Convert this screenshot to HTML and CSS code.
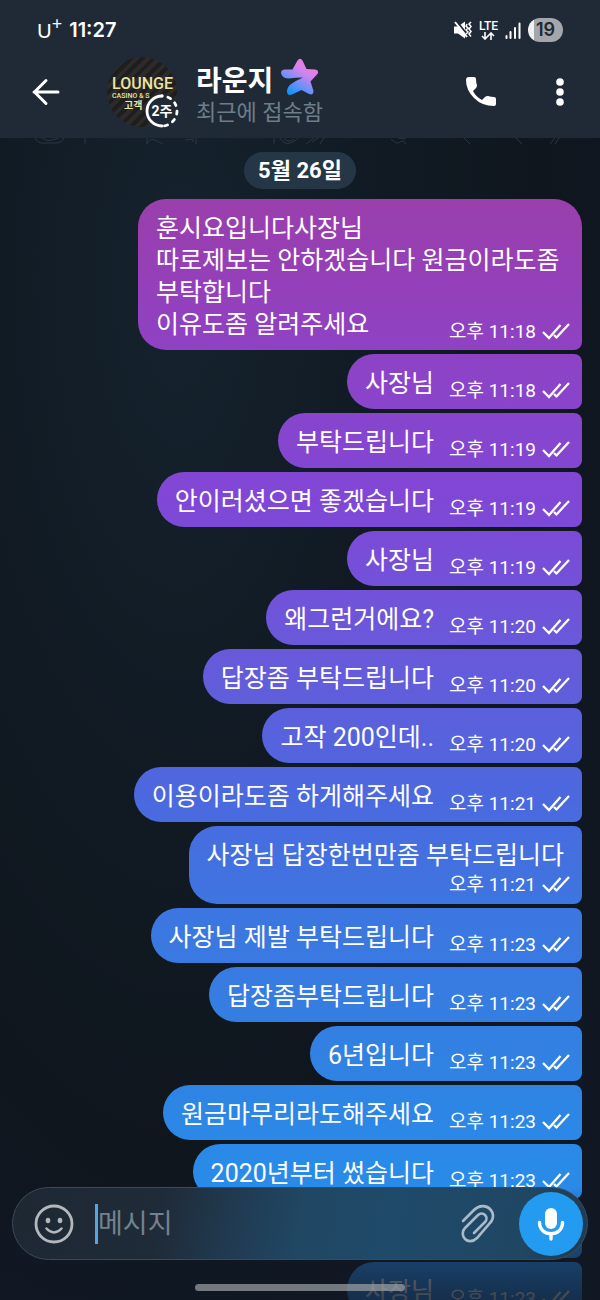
FILE: index.html
```
<!DOCTYPE html>
<html lang="ko">
<head>
    <meta charset="UTF-8">
    <title>라운지</title>
    <meta name="viewport" content="width=device-width, initial-scale=1">
    <link rel="stylesheet" href="styles.css">
</head>
<body>
    <!-- Shared icons -->
    <svg class="sprite" aria-hidden="true">
        <symbol id="checks" viewBox="0 0 28 18">
            <path d="M1 10l6 6L18.500 3M12 13l3 3M14 16L27 2" fill="none" stroke="currentColor" stroke-width="2.300"/>
        </symbol>
    </svg>

    <header class="header">
        <!-- Status bar -->
        <div class="status">
            <span class="carrier">U<sup>+</sup></span>
            <span class="clock">11:27</span>
            <div class="status-icons">
                <svg width="18" height="18" viewBox="0 0 18 18">
                    <path d="M0 5.500h4l7-5v17l-7-5H0z" fill="#fff"/>
                    <path d="M2.500 0l11 14" stroke="#202a36" stroke-width="2"/>
                    <path d="M1 1l12 15" stroke="#fff" stroke-width="2"/>
                    <path d="M13 3l-1 2 2 2-2 2 2 2-2 2M17 1l-2 2 2 2.500-2 2.500 2 2.500-2 2.500 2 2.500" fill="none" stroke="#fff" stroke-width="1.500"/>
                </svg>
                <div class="network">
                    <span>LTE</span>
                    <svg width="14" height="8" viewBox="0 0 14 8"><path d="M4 0v7M1 4l3 3 3-3M10 8V1M7 4l3-3 3 3" fill="none" stroke="#fff" stroke-width="1.600"/></svg>
                </div>
                <svg width="16" height="17" viewBox="0 0 16 17">
                    <path d="M1.500 16v-2M5.500 16V10M10 16V6M14.500 16V1.500" stroke="#fff" stroke-width="2" stroke-linecap="round"/>
                </svg>
                <span class="battery">19</span>
            </div>
        </div>

        <!-- Chat title -->
        <div class="topbar">
            <button class="icon-button back" type="button" aria-label="뒤로">
                <svg width="28" height="28" viewBox="0 0 28 28"><path d="M26 14H2M14 2.500L2.500 14 14 25.500" fill="none" stroke="#fff" stroke-width="3" stroke-linecap="round" stroke-linejoin="round"/></svg>
            </button>
            <div class="avatar">
                <span class="avatar-name">LOUNGE</span>
                <span class="avatar-sub">CASINO &amp; S</span>
                <span class="avatar-ko">고객</span>
                <div class="timer">
                    <svg width="34" height="34" viewBox="0 0 34 34">
                        <circle cx="17" cy="17" r="17" fill="#202a36"/>
                        <path d="M17 2a15 15 0 0 0 0 30" fill="none" stroke="#fff" stroke-width="2.800" stroke-linecap="round"/>
                        <path d="M17 2a15 15 0 0 1 0 30" fill="none" stroke="#fff" stroke-width="2.800" stroke-linecap="round" stroke-dasharray="3 5.800" stroke-dashoffset="-6"/>
                    </svg>
                    <span>2주</span>
                </div>
            </div>
            <div class="peer">
                <h1>라운지
                    <svg width="38" height="38" viewBox="0 0 38 38">
                        <defs>
                            <linearGradient id="star" x1="0.75" y1="0.1" x2="0.2" y2="0.95">
                                <stop offset="0" stop-color="#ee7de2"/>
                                <stop offset="0.3" stop-color="#d383ec"/>
                                <stop offset="0.65" stop-color="#6e90fb"/>
                                <stop offset="1" stop-color="#0a95ff"/>
                            </linearGradient>
                        </defs>
                        <path d="M16.500 2.500Q19 -1 21.500 2.500L25.500 11L34.500 11.500Q39 13 36 16.500L29.500 23.500L32.500 33Q32.500 37.500 28 36L20.500 32L11 36.500Q6.500 38 6 34Q6 29 9.500 26.500Q14 23 22 19.500Q15 19.500 7 20.500Q1 20 0 15Q0 11.500 4 11.500L11.500 11.500Z" fill="url(#star)"/>
                    </svg>
                </h1>
                <p>최근에 접속함</p>
            </div>
            <button class="icon-button" type="button" aria-label="전화">
                <svg width="30" height="30" viewBox="0 0 30 30"><path d="M3 0h5q2 0 2 2 0 4 1 6 0 2-1 3l-3 3q3 6 9 9l3-3q1-1 3-1 3 1 6 1 2 0 2 2v5q0 2-2 2Q16 29 8 21 0 13 0 3q0-3 3-3z" fill="#fff"/></svg>
            </button>
            <button class="icon-button menu" type="button" aria-label="메뉴">
                <svg width="8" height="28" viewBox="0 0 8 28"><g fill="#fff"><circle cx="4" cy="4" r="3.800"/><circle cx="4" cy="14" r="3.800"/><circle cx="4" cy="24" r="3.800"/></g></svg>
            </button>
        </div>
    </header>

    <!-- Edge of the wallpaper pattern -->
    <svg class="doodles" viewBox="0 0 600 6" height="6" aria-hidden="true">
        <path d="M35 0q3 6 9 5h12q6 0 8-5M42 0q6 5 16 0M85 0v6M147 0v6q3-6 8-4l8 4M185 2l8-1v3M196 0v6M274 0v6M280 0q4 7 10 5t8-5M284 1q5 4 10 0M306 6l8-6M312 4l6-4M320 6l4-6M391 1q6 6 9 3t6 2M398 0l8 1M464 0l6 6M516 0l6 6M550 6l5-6M555 6l4-6" fill="none" stroke="#2a3742" stroke-width="1"/>
    </svg>

    <main class="chat">
        <div class="date">5월 26일</div>
        <div class="msg msg-long">
            <p>훈시요입니다사장님<br>따로제보는 안하겠습니다 원금이라도좀 부탁합니다<br>이유도좀 알려주세요</p>
            <div class="meta"><time>오후 11:18</time><svg><use href="#checks"/></svg></div>
        </div>
        <div class="msg"><p>사장님</p><div class="meta"><time>오후 11:18</time><svg><use href="#checks"/></svg></div></div>
        <div class="msg"><p>부탁드립니다</p><div class="meta"><time>오후 11:19</time><svg><use href="#checks"/></svg></div></div>
        <div class="msg"><p>안이러셨으면 좋겠습니다</p><div class="meta"><time>오후 11:19</time><svg><use href="#checks"/></svg></div></div>
        <div class="msg"><p>사장님</p><div class="meta"><time>오후 11:19</time><svg><use href="#checks"/></svg></div></div>
        <div class="msg"><p>왜그런거에요?</p><div class="meta"><time>오후 11:20</time><svg><use href="#checks"/></svg></div></div>
        <div class="msg"><p>답장좀 부탁드립니다</p><div class="meta"><time>오후 11:20</time><svg><use href="#checks"/></svg></div></div>
        <div class="msg"><p>고작 200인데..</p><div class="meta"><time>오후 11:20</time><svg><use href="#checks"/></svg></div></div>
        <div class="msg"><p>이용이라도좀 하게해주세요</p><div class="meta"><time>오후 11:21</time><svg><use href="#checks"/></svg></div></div>
        <div class="msg msg-stacked"><p>사장님 답장한번만좀 부탁드립니다</p><div class="meta"><time>오후 11:21</time><svg><use href="#checks"/></svg></div></div>
        <div class="msg"><p>사장님 제발 부탁드립니다</p><div class="meta"><time>오후 11:23</time><svg><use href="#checks"/></svg></div></div>
        <div class="msg"><p>답장좀부탁드립니다</p><div class="meta"><time>오후 11:23</time><svg><use href="#checks"/></svg></div></div>
        <div class="msg"><p>6년입니다</p><div class="meta"><time>오후 11:23</time><svg><use href="#checks"/></svg></div></div>
        <div class="msg"><p>원금마무리라도해주세요</p><div class="meta"><time>오후 11:23</time><svg><use href="#checks"/></svg></div></div>
        <div class="msg"><p>2020년부터 썼습니다</p><div class="meta"><time>오후 11:23</time><svg><use href="#checks"/></svg></div></div>
        <div class="msg msg-empty"></div>
        <div class="msg"><p>사장님</p><div class="meta"><time>오후 11:23</time><svg><use href="#checks"/></svg></div></div>
    </main>

    <!-- Message input, floats over the chat -->
    <footer class="footer">
        <form class="composer">
            <button class="icon-button" type="button" aria-label="이모지">
                <svg width="40" height="40" viewBox="0 0 40 40">
                    <circle cx="20" cy="20" r="18" fill="none" stroke="#b4b8bd" stroke-width="2.800"/>
                    <ellipse cx="14" cy="16.500" rx="2.300" ry="2.800" fill="#b4b8bd"/>
                    <ellipse cx="26" cy="16.500" rx="2.300" ry="2.800" fill="#b4b8bd"/>
                    <path d="M12.500 24.500q7.500 8 15 0" fill="none" stroke="#b4b8bd" stroke-width="2.500" stroke-linecap="round"/>
                </svg>
            </button>
            <div class="field">
                <span class="caret"></span>
                <input type="text" placeholder="메시지" aria-label="메시지">
            </div>
            <button class="icon-button" type="button" aria-label="파일 첨부">
                <svg width="36" height="40" viewBox="0 0 36 40">
                    <path d="M3 17L14 6C19 1 26 1 30 5s4 10 0 14L17 34c-4 4-9 4-12 1s-3-8 0-11l12-12c3-3 6-3 8-1s2 5 0 7L14 29" fill="none" stroke="#a9bac9" stroke-width="2.600" stroke-linecap="round"/>
                </svg>
            </button>
            <button class="mic" type="button" aria-label="음성 메시지">
                <svg width="28" height="34" viewBox="0 0 28 34">
                    <rect x="8" y="1" width="12" height="21" rx="6" fill="#fff"/>
                    <path d="M2.500 15.500c0 15 23 15 23 0M14 27v5" fill="none" stroke="#fff" stroke-width="3.400" stroke-linecap="round"/>
                </svg>
            </button>
        </form>
        <div class="home-bar"></div>
    </footer>
</body>
</html>
```
FILE: styles.css
```
* {
    box-sizing: border-box;
}
body {
    margin: 0;
    height: 100vh;
    display: flex;
    flex-direction: column;
    position: relative;
    overflow: hidden;
    font-family: Roboto, "Noto Sans CJK KR", sans-serif;
    color: #fff;
    background: radial-gradient(ellipse at 30% 22%, #15222d 0%, #111a23 35%, #0f161e 60%, #121824 100%);
}
h1, p {
    margin: 0;
}
button {
    padding: 0;
    border: none;
    background: none;
    cursor: pointer;
}
svg {
    display: block;
    flex: none;
}
.sprite {
    position: absolute;
    width: 0;
    height: 0;
}

/* Header */
.header {
    background: #202a36;
    flex: none;
}
.status {
    display: flex;
    align-items: center;
    height: 60px;
    padding: 0 37px;
}
.carrier {
    font-family: Lato, sans-serif;
    font-weight: 400;
    font-size: 20px;
    margin-right: 7px;
}
.carrier sup {
    font-size: 18px;
    line-height: 1px;
}
.clock {
    font-family: Inter, sans-serif;
    font-weight: 600;
    font-size: 20px;
}
.status-icons {
    display: flex;
    align-items: center;
    gap: 7px;
    margin-left: auto;
}
.network {
    display: flex;
    flex-direction: column;
    align-items: center;
    font-size: 12px;
    font-weight: 500;
    line-height: 12px;
}
.battery {
    width: 35px;
    border-radius: 12px;
    background: linear-gradient(90deg, #f0f0f1 6px, #a3a6aa 6px);
    color: #202a36;
    font-family: Inter, sans-serif;
    font-size: 18px;
    font-weight: 600;
    line-height: 24px;
    text-align: center;
}
.topbar {
    display: flex;
    align-items: center;
    height: 78px;
    padding: 0 36px 14px 32px;
}
.back {
    margin-right: 47px;
}
.avatar {
    position: relative;
    width: 70px;
    height: 70px;
    margin-right: 19px;
    border-radius: 50%;
    background: repeating-linear-gradient(135deg, #1f1e1e 0 4px, #2d2b2a 4px 8px);
    color: #ece3a0;
    display: flex;
    flex-direction: column;
    padding: 18px 0 0 5px;
    white-space: nowrap;
}
.avatar-name {
    font-size: 16px;
    font-weight: 500;
    line-height: 18px;
}
.avatar-sub {
    font-size: 7px;
    font-weight: 500;
    line-height: 6px;
}
.avatar-ko {
    margin-left: 12px;
    font-size: 10px;
    font-weight: 700;
    line-height: 14px;
}
.timer {
    position: absolute;
    right: -2px;
    bottom: -1px;
}
.timer span {
    position: absolute;
    inset: 0;
    color: #fff;
    font-size: 14px;
    font-weight: 700;
    line-height: 34px;
    text-align: center;
}
.peer {
    flex: 1;
}
.peer h1 {
    display: flex;
    align-items: flex-end;
    gap: 8px;
    font-size: 28px;
    font-weight: 700;
    line-height: 36px;
}
.peer h1 svg {
    margin-bottom: 4px;
}
.peer p {
    color: #6c7d8c;
    font-size: 22px;
    line-height: 26px;
}
.menu {
    margin-left: 60px;
}

/* Messages */
.doodles {
    width: 100%;
}
.chat {
    flex: 1;
    min-height: 0;
    overflow: hidden;
    display: flex;
    flex-direction: column;
    align-items: flex-end;
    gap: 4px;
    padding: 8px 18px 0;
}
.date {
    align-self: center;
    flex: none;
    margin-bottom: 6px;
    padding: 0 14px;
    border-radius: 19px;
    background: #253746;
    font-size: 22px;
    font-weight: 700;
    line-height: 37px;
}
.msg {
    flex: none;
    display: flex;
    align-items: flex-end;
    padding: 14px 12px 9px 18px;
    border-radius: 28px 8px 8px 28px;
    background: linear-gradient(#9a3fac 200px, #9340bc 300px, #8a44ca 390px, #8047d6 500px, #6a58da 640px, #4b69df 800px, #3e75e0 900px, #2f83e3 1080px, #2a8ae8 1160px) fixed;
}
.msg p {
    margin-right: 15px;
    font-size: 25px;
    line-height: 32px;
    word-break: keep-all;
}
.meta {
    display: flex;
    align-items: center;
    gap: 6px;
    height: 24px;
    font-size: 19px;
    white-space: nowrap;
}
.meta svg {
    width: 28px;
    height: 18px;
    margin-top: 4px;
}
.msg-long {
    display: grid;
    max-width: 74vw;
    border-top-right-radius: 28px;
}
.msg-long p, .msg-long .meta {
    grid-area: 1 / 1;
}
.msg-long .meta {
    align-self: end;
    justify-self: end;
}
.msg-stacked {
    flex-direction: column;
    padding-bottom: 12px;
}
.msg-stacked .meta {
    height: 20px;
}
.msg-long p, .msg-stacked p {
    margin-right: 6px;
}
.msg-empty {
    width: 60%;
    height: 55px;
}

/* Message input */
.footer {
    position: absolute;
    left: 0;
    right: 0;
    bottom: 0;
    padding: 0 12px 9px;
    background: linear-gradient(rgba(16, 24, 36, 0) 0, rgba(16, 24, 36, 0.6) 60px, rgba(16, 24, 36, 0.8) 100%);
}
.composer {
    display: flex;
    align-items: center;
    height: 73px;
    padding: 0 4px 0 21px;
    border: 1px solid #3b4a58;
    border-radius: 37px;
    background: linear-gradient(100deg, #1d2833 0%, #1f2b38 26%, #203a50 38%, #204763 50%, #1f4a69 65%, #1f4764 88%, #223a4e 100%);
}
.field {
    flex: 1;
    min-width: 0;
    display: flex;
    align-items: center;
    margin-left: 21px;
}
.caret {
    width: 3px;
    height: 40px;
    background: #56a4e0;
}
.field input {
    flex: 1;
    min-width: 0;
    padding: 0;
    border: none;
    outline: none;
    background: none;
    color: #fff;
    font: 27px Roboto, "Noto Sans CJK KR", sans-serif;
}
.field input::placeholder {
    color: #74828f;
    opacity: 1;
}
.mic {
    display: flex;
    align-items: center;
    justify-content: center;
    width: 64px;
    height: 64px;
    margin-left: 23px;
    border-radius: 50%;
    background: #239bf1;
}
.home-bar {
    width: 210px;
    height: 7px;
    margin: 24px auto 0;
    border-radius: 4px;
    background: rgba(160, 162, 166, 0.7);
}
```
